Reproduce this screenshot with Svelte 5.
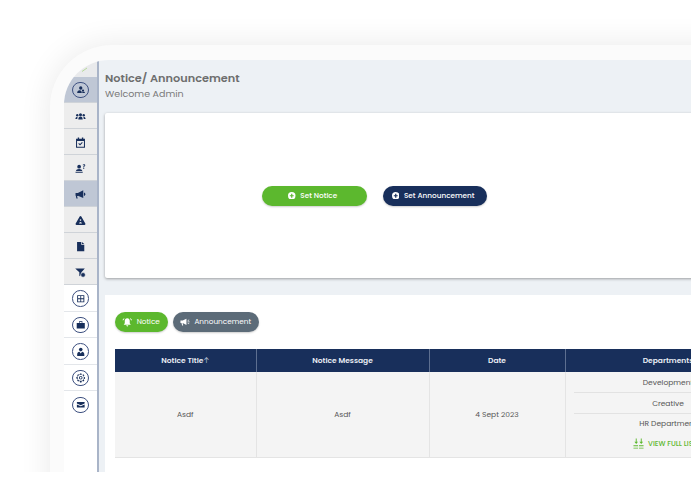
<script>
	const railItems = [
		{ icon: 'users', ring: true, tone: 'active' },
		{ icon: 'team', tone: 'grey' },
		{ icon: 'calendar', tone: 'grey' },
		{ icon: 'ask', tone: 'grey' },
		{ icon: 'megaphone', tone: 'active' },
		{ icon: 'warning', tone: 'grey' },
		{ icon: 'file', tone: 'grey' },
		{ icon: 'filter', tone: 'grey' },
		{ icon: 'grid', ring: true, tone: 'white' },
		{ icon: 'case', ring: true, tone: 'white' },
		{ icon: 'person', ring: true, tone: 'white' },
		{ icon: 'gear', ring: true, tone: 'white' },
		{ icon: 'mail', ring: true, tone: 'white' }
	];

	const departments = ['Development', 'Creative', 'HR Department'];
</script>

{#snippet glyph(name)}
	<svg viewBox="0 0 16 16" class="glyph" aria-hidden="true">
		{#if name === 'users'}
			<circle cx="8" cy="5" r="2.8" />
			<circle cx="11.8" cy="9.4" r="1.9" />
			<path d="M2 13.500c0-2.800 1.800-4.500 4-4.500s3.800 1.700 3.800 4.500zM10.600 13.500c0-1 0-1.400-.3-2h3c1 0 1.700.8 1.700 2z" />
		{:else if name === 'team'}
			<circle cx="8" cy="5.400" r="2.200" />
			<circle cx="3.300" cy="6" r="1.700" />
			<circle cx="12.700" cy="6" r="1.700" />
			<path d="M4.800 12.500c0-2.800 1.200-4.400 3.200-4.400s3.200 1.600 3.200 4.400zM.6 11.600c0-2 1-3.400 2.700-3.400l.8.200c-.6.800-.8 2-.8 3.200zM15.400 11.600c0-2-1-3.400-2.700-3.400l-.8.200c.6.800.8 2 .8 3.200z" />
		{:else if name === 'calendar'}
			<path fill-rule="evenodd" d="M1.500 2.600h2.500V.6h2v2h4v-2h2v2h2.500V15.600H1.500zM3 5.800v8.300h10V5.800z" />
			<path d="M4.800 9.800l1-1 1.500 1.500 2.900-2.900 1 1-3.900 3.900z" />
		{:else if name === 'ask'}
			<circle cx="6" cy="5.400" r="2.700" />
			<path d="M1.400 11.600c.2-2 2-3 4.600-3s4.400 1 4.600 3zM.8 12.800h10.400v1.500H.8z" />
			<path d="M11 3c.4-.9 1.200-1.300 2-1.300 1.200 0 2 .7 2 1.700 0 1.500-1.800 1.500-1.800 3h-1.300c0-2 1.700-2 1.700-3 0-.4-.3-.6-.7-.6s-.7.3-.9.7zM12.100 7.300h1.300v1.300h-1.300z" />
		{:else if name === 'megaphone'}
			<path d="M.8 5.800h3.400l7.800-4v11.400L4.200 9.800V10H3l.9 3.800H2L1.200 9.800H.8zM13 5.200c1.300.4 2.200 1.300 2.200 2.500s-.9 2.100-2.200 2.500z" />
		{:else if name === 'warning'}
			<path fill-rule="evenodd" d="M8 1.500c.5 0 .9.3 1.200.8l5.800 10.200c.5 1-.1 2-1.200 2H2.200c-1.100 0-1.700-1-1.200-2L6.800 2.300C7.100 1.800 7.500 1.500 8 1.500zM8 6.200a1.200 1.200 0 1 0 0 2.400A1.200 1.200 0 1 0 8 6.200zM6 12.200h4c0-1.100-.9-2.200-2-2.200s-2 1.100-2 2.200z" />
		{:else if name === 'file'}
			<path d="M3 1.500h6v4h4.500v9.500H3zM10 1.500l3.500 3H10z" />
		{:else if name === 'filter'}
			<path d="M.3 2.300h14L9.300 7.800v3.400L6.300 13.500V7.800z" />
			<circle cx="11.700" cy="11.500" r="3.400" stroke="#ededed" stroke-width="1" />
		{:else if name === 'grid'}
			<path fill-rule="evenodd" d="M2 2h12v12H2zM3.500 3.500v3.800h3.800V3.500zM8.700 3.500v3.800h3.800V3.500zM3.500 8.700v3.800h3.800V8.700zM8.700 8.700v3.800h3.800V8.700z" />
		{:else if name === 'case'}
			<path d="M1.200 5h13.600v9.500H1.200zM5.200 4.500V2h5.600v2.500H9.500V3.300H6.500v1.200z" />
		{:else if name === 'person'}
			<circle cx="8" cy="4.400" r="3" />
			<path d="M2 15v-2.500C2 10 3.600 8.500 5.800 8.200L8 11l2.200-2.800c2.200.3 3.800 1.800 3.800 4.300V15z" />
		{:else if name === 'gear'}
			<path fill-rule="evenodd" d="M6.800 1h2.400l.4 1.800 1.200.5 1.600-1 1.700 1.700-1 1.600.5 1.200 1.800.4v2.400l-1.800.4-.5 1.200 1 1.600-1.700 1.700-1.600-1-1.200.5-.4 1.800H6.800l-.4-1.800-1.200-.5-1.600 1-1.700-1.700 1-1.600-.5-1.200L.6 9.200V6.800l1.800-.4.5-1.200-1-1.600 1.700-1.700 1.600 1 1.200-.5zM8 2.800A5.200 5.200 0 1 0 8 13.200 5.200 5.200 0 1 0 8 2.800zM8 5a3 3 0 1 1 0 6 3 3 0 1 1 0-6zM8 6.500a1.500 1.500 0 1 0 0 3 1.500 1.500 0 1 0 0-3z" />
		{:else if name === 'mail'}
			<path d="M1.500 3.500h13v2.600L8 9 1.500 6.100zM1.500 7.600L8 10.500l6.500-2.900v5h-13z" />
		{/if}
	</svg>
{/snippet}

<div class="stage">
	<div class="device">
		<div class="screen">
			<nav class="rail">
				<div class="corner">
					<svg viewBox="0 0 33 17" class="corner-mark" aria-hidden="true"><path d="M18 11.500L23 8" /></svg>
				</div>
				{#each railItems as item}
					<div class="rail-item {item.tone}">
						{#if item.ring}
							<span class="ring">{@render glyph(item.icon)}</span>
						{:else}
							{@render glyph(item.icon)}
						{/if}
					</div>
				{/each}
			</nav>

			<main class="content">
				<header class="page-head">
					<h1>Notice/ Announcement</h1>
					<p>Welcome Admin</p>
				</header>

				<section class="card actions">
					<button class="pill green big">
						<svg viewBox="0 0 10 10" class="plus"><path fill-rule="evenodd" d="M5 0a5 5 0 1 1 0 10A5 5 0 0 1 5 0zM4.200 2.400v1.800H2.400v1.600h1.800v1.800h1.600V5.800h1.800V4.200H5.800V2.400z" /></svg>
						Set Notice
					</button>
					<button class="pill navy big">
						<svg viewBox="0 0 10 10" class="plus"><path fill-rule="evenodd" d="M5 0a5 5 0 1 1 0 10A5 5 0 0 1 5 0zM4.200 2.400v1.800H2.400v1.600h1.800v1.800h1.600V5.800h1.800V4.200H5.800V2.400z" /></svg>
						Set Announcement
					</button>
				</section>

				<section class="card listing">
					<div class="tabs">
						<button class="pill green tab">
							<svg viewBox="0 0 14 14" class="tab-icon"><path d="M7 1.500c2.200 0 3.300 1.600 3.300 3.600v3.200l1.500 2H2.200l1.500-2V5.100C3.700 3.100 4.800 1.500 7 1.500zM5.400 11h3.200L7 13zM.6 4L2.600 1.600l.8.7-2 2.400zM13.400 4l-2-2.400-.8.7 2 2.400z" /></svg>
							Notice
						</button>
						<button class="pill slate tab">
							<svg viewBox="0 0 14 14" class="tab-icon"><path d="M.6 4.800h3l5-2.600v8.400l-5-2.600-.1 0 .7 3.300H2.800L2 8H.6zM10 4.600l2-1.400.5.700-2 1.400zM10 6h2.800v.9H10zM10 8.200l.5-.7 2 1.400-.5.700z" /></svg>
							Announcement
						</button>
					</div>

					<div class="table">
						<div class="th">Notice Title<span class="sort">↑</span></div>
						<div class="th">Notice Message</div>
						<div class="th">Date</div>
						<div class="th">Departments</div>

						<div class="td">Asdf</div>
						<div class="td">Asdf</div>
						<div class="td">4 Sept 2023</div>
						<div class="td depts">
							{#each departments as dept}
								<div class="dept">{dept}</div>
							{/each}
							<div class="view-all">
								<svg viewBox="0 0 12 12" class="view-icon"><path d="M3 .5h1v3.500h1.500L3.500 6.500 1.500 4H3zM8.500 .5h1v3.500H11L9 6.500 7 4h1.500zM.5 8h5v1h-5zM6.500 8h5v1h-5zM.5 10.500h5v1h-5zM6.500 10.500h5v1h-5z" /></svg>
								VIEW FULL LIST
							</div>
						</div>
					</div>
				</section>
			</main>
		</div>
	</div>
</div>

<style>
	:global(body) {
		margin: 0;
		background: #fff;
		overflow: hidden;
	}

	.stage {
		width: 691px;
		height: 472px;
		padding: 45px 0 0 50px;
		box-sizing: border-box;
		overflow: hidden;
		font-family: Poppins, Inter, "Noto Sans", sans-serif;
	}

	.device {
		width: 800px;
		height: 460px;
		padding: 15px 0 0 14px;
		box-sizing: border-box;
		background: #fbfbfb;
		border-top-left-radius: 62px;
		box-shadow: 0 0 32px rgba(0, 0, 0, 0.09);
	}

	.screen {
		display: flex;
		height: 412px;
		border-top-left-radius: 45px;
		overflow: hidden;
		background: #fff;
	}

	.rail {
		flex: none;
		width: 33px;
		border-right: 2px solid #a9b4c8;
		background: #fff;
	}

	.corner {
		height: 17px;
		background: #e9eaec;
	}

	.corner-mark {
		display: block;
		width: 33px;
		height: 17px;
		fill: none;
		stroke: #a9d483;
		stroke-width: 0.8;
	}

	.rail-item {
		height: 26px;
		padding-top: 1px;
		display: flex;
		align-items: center;
		justify-content: center;
		box-sizing: border-box;
		border-bottom: 1px solid #cfd3d8;
	}

	.rail-item.active {
		background: #bfc7d5;
	}

	.rail-item.grey {
		background: #ededed;
	}

	.rail-item.white {
		height: 26.500px;
		background: #fff;
		border-bottom-color: #e3e6ea;
	}

	.rail-item:last-child {
		border-bottom: 0;
	}

	.ring {
		width: 14.500px;
		height: 14.500px;
		border: 1px solid #3d5080;
		border-radius: 50%;
		display: flex;
		align-items: center;
		justify-content: center;
	}

	.glyph {
		width: 11px;
		height: 11px;
		fill: #182f5b;
	}

	.ring .glyph {
		width: 9.500px;
		height: 9.500px;
	}

	.content {
		flex: 1;
		min-width: 0;
		background: #edf1f5;
		padding-left: 6px;
	}

	.page-head {
		height: 53px;
		padding-top: 11px;
		box-sizing: border-box;
	}

	.page-head h1 {
		margin: 0;
		font-size: 11.300px;
		line-height: 14px;
		font-weight: 600;
		color: #6e6e6e;
	}

	.page-head p {
		margin: 2px 0 0;
		font-size: 9.500px;
		line-height: 14px;
		color: #7a7a7a;
	}

	.card {
		background: #fff;
	}

	.actions {
		height: 165px;
		display: flex;
		align-items: center;
		gap: 16px;
		padding-left: 157px;
		box-sizing: border-box;
		box-shadow: 0 1px 3px rgba(0, 0, 0, 0.35);
		border-radius: 2px 0 0 2px;
		margin-bottom: 17px;
	}

	.pill {
		display: flex;
		align-items: center;
		justify-content: center;
		border: 0;
		color: #fff;
		font-family: inherit;
		font-size: 7.300px;
		font-weight: 500;
		white-space: nowrap;
		padding: 0;
		box-shadow: 0 1px 2px rgba(0, 0, 0, 0.2);
	}

	.big {
		height: 20px;
		width: 104.500px;
		gap: 4.500px;
		padding-right: 3px;
		border-radius: 10px;
	}

	.green {
		background: #5cb82e;
	}

	.navy {
		background: #182f5b;
	}

	.slate {
		background: #5c6b78;
	}

	.plus {
		width: 7.500px;
		height: 7.500px;
		fill: #fff;
	}

	.listing {
		height: 177px;
		padding: 17px 0 0 10px;
		box-sizing: border-box;
	}

	.tabs {
		display: flex;
		gap: 5px;
		margin-bottom: 17px;
	}

	.tab {
		height: 20px;
		border-radius: 10px;
		gap: 4px;
		padding-right: 1px;
		font-weight: 400;
	}

	.tab.green {
		width: 53px;
	}

	.tab.slate {
		width: 86px;
	}

	.tab-icon {
		width: 10.500px;
		height: 10.500px;
		fill: #fff;
	}

	.table {
		display: grid;
		grid-template-columns: 141.500px 173px 136px 206px;
		grid-template-rows: 23px 85px;
		width: 656.500px;
		font-size: 7.500px;
		color: #555;
		border-bottom: 1px solid #e4e4e4;
	}

	.th {
		background: #182f5b;
		color: #e9edf4;
		font-weight: 600;
		display: flex;
		align-items: center;
		justify-content: center;
		border-right: 1px solid #5d6f90;
	}

	.sort {
		font-size: 7px;
		font-weight: 400;
		color: #b9c4d8;
	}

	.td {
		background: #f4f4f4;
		display: flex;
		align-items: center;
		justify-content: center;
		border-right: 1px solid #e4e4e4;
	}

	.depts {
		flex-direction: column;
		justify-content: flex-start;
		align-items: stretch;
		padding: 0 8px;
	}

	.dept {
		height: 20px;
		line-height: 21px;
		border-bottom: 1px solid #e2e2e2;
		text-align: center;
	}

	.dept:nth-child(3) {
		border-bottom: 0;
		height: 19px;
		line-height: 20px;
	}

	.view-all {
		display: flex;
		align-items: center;
		justify-content: center;
		gap: 4px;
		padding-right: 6px;
		color: #5cb82e;
		font-size: 7px;
		font-weight: 500;
		margin-top: 5px;
		white-space: nowrap;
	}

	.view-icon {
		width: 11px;
		height: 11px;
		fill: #5cb82e;
	}
</style>
